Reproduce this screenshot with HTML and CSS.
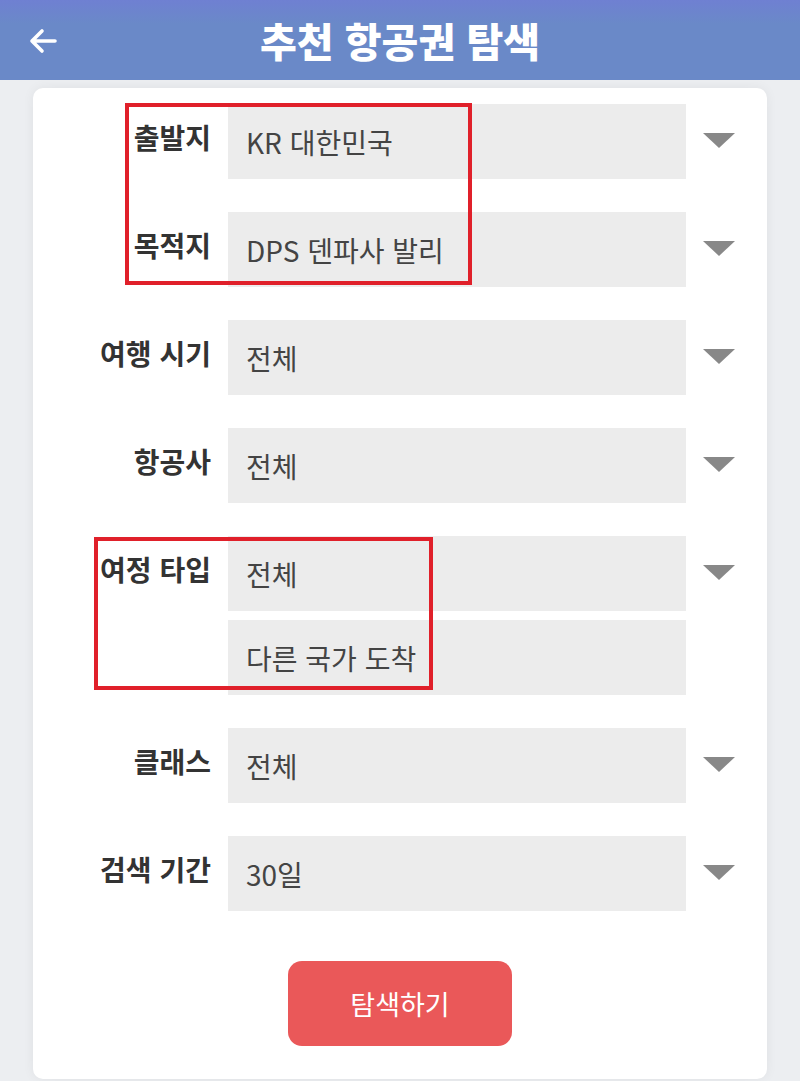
FILE: index.html
```html
<!DOCTYPE html>
<html lang="ko">
<head>
    <meta charset="UTF-8">
    <meta name="viewport" content="width=device-width, initial-scale=1.0">
    <title>추천 항공권 탐색</title>
    <link rel="stylesheet" href="styles.css">
</head>
<body>
    <header class="topbar">
        <span class="back">
            <svg width="30" height="26" viewBox="0 0 30 26">
                <path d="M27 13H4M14 3L4 13l10 10" fill="none" stroke="#fff" stroke-width="3.6" stroke-linecap="round" stroke-linejoin="round"/>
            </svg>
        </span>
        <h1>추천 항공권 탐색</h1>
    </header>

    <main class="card">
        <div class="row">
            <label class="label">출발지</label>
            <div class="fields"><div class="field">KR 대한민국</div></div>
            <span class="caret"></span>
        </div>
        <div class="row">
            <label class="label">목적지</label>
            <div class="fields"><div class="field">DPS 덴파사 발리</div></div>
            <span class="caret"></span>
        </div>
        <div class="row">
            <label class="label">여행 시기</label>
            <div class="fields"><div class="field">전체</div></div>
            <span class="caret"></span>
        </div>
        <div class="row">
            <label class="label">항공사</label>
            <div class="fields"><div class="field">전체</div></div>
            <span class="caret"></span>
        </div>
        <div class="row">
            <label class="label">여정 타입</label>
            <div class="fields">
                <div class="field">전체</div>
                <div class="field">다른 국가 도착</div>
            </div>
            <span class="caret"></span>
        </div>
        <div class="row">
            <label class="label">클래스</label>
            <div class="fields"><div class="field">전체</div></div>
            <span class="caret"></span>
        </div>
        <div class="row">
            <label class="label">검색 기간</label>
            <div class="fields"><div class="field">30일</div></div>
            <span class="caret"></span>
        </div>

        <div class="actions">
            <button class="search-btn">탐색하기</button>
        </div>

        <div class="mark mark-route"></div>
        <div class="mark mark-type"></div>
    </main>
</body>
</html>
```

FILE: styles.css
```css
body {
    margin: 0;
    background: #eceef1;
    font-family: 'Noto Sans CJK KR', 'Noto Sans', sans-serif;
    color: #333;
    height: 1081px;
    overflow: hidden;
}
.topbar {
    height: 80px;
    background: linear-gradient(to bottom, #6f80d2, #6a89c8 30%);
    display: flex;
    align-items: center;
    justify-content: center;
    position: relative;
}
.topbar h1 {
    margin: 0;
    color: white;
    font-size: 40px;
    font-weight: 900;
    line-height: 1;
}
.back {
    position: absolute;
    left: 28px;
    top: 28px;
    line-height: 0;
}
.card {
    position: relative;
    margin: 8px 33px 0;
    background: white;
    border-radius: 10px;
    padding: 16px 0 33px;
    box-shadow: 0 0 12px rgba(0, 0, 0, 0.06);
}
.row {
    display: grid;
    grid-template-columns: 178px 458px 1fr;
    column-gap: 17px;
    margin-bottom: 33px;
}
.label {
    text-align: right;
    font-size: 28px;
    font-weight: bold;
    color: #333;
    padding-top: 14px;
    line-height: 38px;
    white-space: nowrap;
}
.fields {
    display: flex;
    flex-direction: column;
    gap: 9px;
}
.field {
    height: 75px;
    background: #ececec;
    display: flex;
    align-items: center;
    padding-left: 18px;
    font-size: 28px;
    color: #444;
}
.caret {
    align-self: start;
    margin-top: 29px;
    width: 0;
    height: 0;
    border-left: 16px solid transparent;
    border-right: 16px solid transparent;
    border-top: 15px solid #888;
}
.actions {
    display: flex;
    justify-content: center;
    padding-top: 17px;
}
.search-btn {
    width: 224px;
    height: 85px;
    background: #ea5859;
    color: white;
    border: none;
    border-radius: 14px;
    font-family: inherit;
    font-size: 27px;
}
.mark {
    position: absolute;
    border: 4px solid #e0202a;
}
.mark-route {
    left: 92px;
    top: 15px;
    width: 339px;
    height: 174px;
}
.mark-type {
    left: 61px;
    top: 449px;
    width: 331px;
    height: 145px;
}
```
